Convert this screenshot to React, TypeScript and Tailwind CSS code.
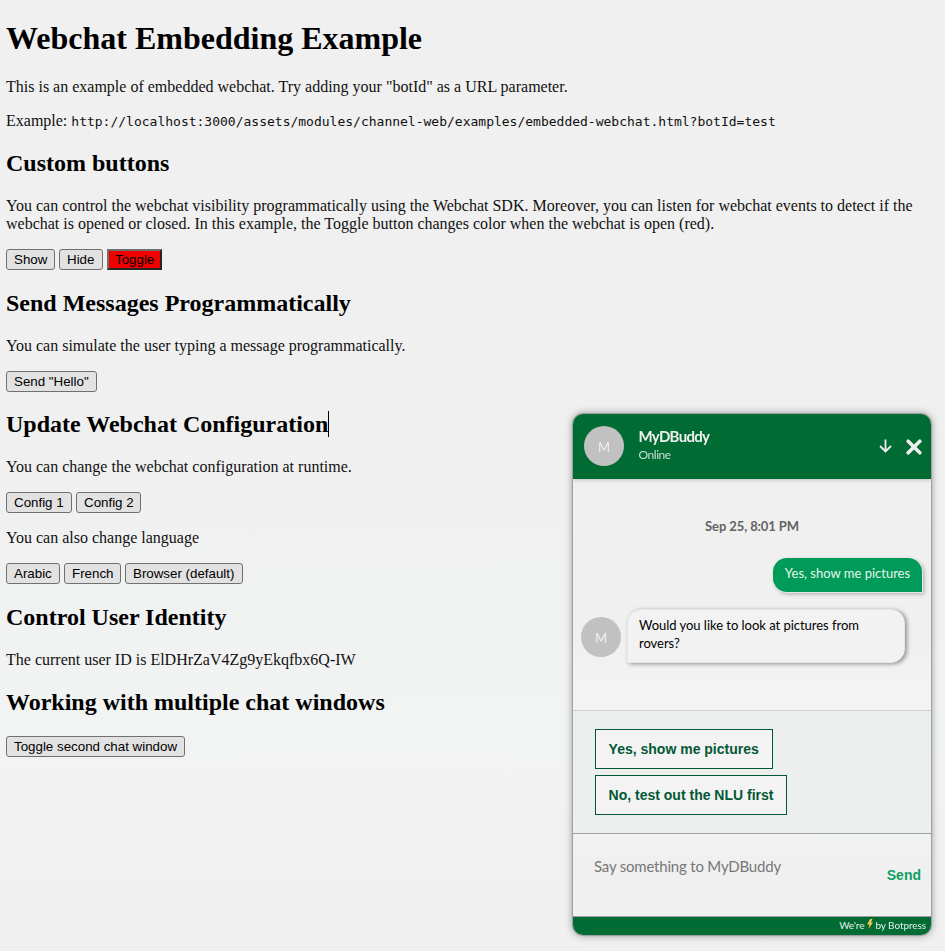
import React from "react";

const serif = "font-['Liberation_Serif',serif]";
const lato = "font-['Lato',sans-serif]";

function H2({ children, tight }: { children: React.ReactNode; tight?: boolean }) {
  return (
    <h2 className={(tight ? "mt-[19px] " : "mt-[20px] ") + "mb-[20px] flex h-[27px] items-center text-[24px] leading-[27px] font-bold text-black"}>
      {children}
    </h2>
  );
}

function Btn({ children, w, active }: { children: React.ReactNode; w: string; active?: boolean }) {
  return (
    <button
      className={
        (active
          ? "border-2 border-t-[#6f6f6f] border-l-[#6f6f6f] border-r-[#262626] border-b-[#262626] bg-[#f20000] pl-[6px] "
          : "rounded-[3px] border border-[#707070] bg-[#e2e2e2] pl-[7px] ") +
        "flex h-[21px] items-center justify-start font-['Liberation_Sans',sans-serif] text-[13.333px] leading-[15px] whitespace-nowrap text-black " +
        w
      }
    >
      {children}
    </button>
  );
}

function Row({ children }: { children: React.ReactNode }) {
  return <div className="flex h-[21px] gap-[4px]">{children}</div>;
}

function Avatar() {
  return (
    <div className="flex size-[40px] shrink-0 items-center justify-center rounded-full bg-[#c1c1c1] pt-px text-[13px] text-[#f0f0f0]">M</div>
  );
}

function ChatHeader() {
  return (
    <div className="z-10 flex h-[65px] shrink-0 items-center bg-[#006b32] pr-[9.5px] pb-px pl-[11px] shadow-[0_1px_4px_rgba(0,0,0,0.2)]">
      <Avatar />
      <div className="mb-[2px] ml-[14.5px] flex-1">
        <div className="text-[15px] leading-[19px] font-bold tracking-[-0.7px] text-[#f0f0f0]">MyDBuddy</div>
        <div className="mt-px text-[12px] leading-[16px] tracking-[-0.45px] text-[#c8dfd2]">Online</div>
      </div>
      <svg className="mr-[13.5px]" width="13" height="14" viewBox="0 0 13 14" fill="none" stroke="#f0f0f0" strokeWidth="1.8">
        <path d="M6.5 .5v12M1 7l5.5 5.5L12 7" />
      </svg>
      <svg className="mt-[1px]" width="16" height="16" viewBox="0 0 16 16" fill="none" stroke="#f0f0f0" strokeWidth="3.6" strokeLinecap="round">
        <path d="M2.2 2.2l11.6 11.6M13.8 2.2L2.2 13.8" />
      </svg>
    </div>
  );
}

function ChatWindow() {
  return (
    <section
      className={
        "fixed top-[414px] left-[573px] flex h-[521px] w-[358px] flex-col overflow-hidden rounded-[10px] bg-[#f0f0f0] shadow-[0_0_1px_1px_rgba(0,0,0,0.2),0_0_8px_rgba(0,0,0,0.42)] " +
        lato
      }
    >
      <ChatHeader />
      <div className="flex h-[231px] shrink-0 flex-col bg-linear-to-b from-[#f0f0f0] from-70% to-[#f4f4f4]">
        <div className="mt-[38px] text-center text-[13px] leading-[18px] font-bold tracking-[-0.1px] text-[#636363]">Sep 25, 8:01 PM</div>
        <div className="mt-[23px] mr-[9px] flex h-[34px] w-[149px] items-center justify-center self-end rounded-[14px] rounded-br-none bg-[#009b58] pb-[4px] text-[13px] whitespace-nowrap text-[#e8f4ed] shadow-[0_0_0_1px_#e6e6e6,2px_2px_4px_rgba(0,0,0,0.3)]">
          Yes, show me pictures
        </div>
        <div className="mt-[17px] ml-[8px] flex items-end">
          <div className="mb-[6px]">
            <Avatar />
          </div>
          <div className="ml-[6px] h-[54px] w-[278px] rounded-[14px] rounded-bl-none border border-[#e6e6e6] bg-[#f2f2f2] pt-[6px] pl-[11px] text-[13px] leading-[18px] tracking-[-0.03px] text-black shadow-[2px_1px_4px_rgba(0,0,0,0.4)]">
            Would you like to look at pictures from
            <br />
            rovers?
          </div>
        </div>
      </div>
      <div className="flex h-[124px] shrink-0 flex-col items-start gap-[6px] border-t border-b border-t-[#d0d1d0] border-b-[#9c9f9d] bg-[#edeeee] pt-[18px] pl-[22px] font-['Liberation_Sans',sans-serif] text-[14px] font-bold text-[#035834]">
        <div className="flex h-[40px] w-[178px] shrink-0 items-center border border-[#035834] bg-[#f2f3f2] pl-[12.6px]">Yes, show me pictures</div>
        <div className="flex h-[40px] w-[192px] shrink-0 items-center border border-[#035834] bg-[#f2f3f2] pl-[12.6px]">No, test out the NLU first</div>
      </div>
      <div className="flex h-[83px] shrink-0 justify-between border-b border-[#9c9f9d] bg-linear-to-b from-[#f1f3f2] to-[#f0f0f0] to-30% pr-[10px] pl-[21px]">
        <span className="mt-[22px] text-[15px] leading-[20px] tracking-[-0.2px] text-[#777777]">Say something to MyDBuddy</span>
        <span className="mt-[32px] font-['Liberation_Sans',sans-serif] text-[14px] leading-[18px] font-bold text-[#0f9f5f]">Send</span>
      </div>
      <div className="flex flex-1 items-center justify-end bg-[#006b32] pr-[5px] pb-[2px] text-[10px] leading-[14px] tracking-[-0.08px] whitespace-nowrap text-[#e4f0e9]">
        We're
        <svg className="mr-[2px] ml-[3px] mb-[2px]" width="6" height="10" viewBox="0 0 6 10">
          <path d="M3 0h2.5L4 3.5h2L1.4 10l1-4.4H0z" fill="#f4c34e" />
        </svg>
        by Botpress
      </div>
    </section>
  );
}

export default function App() {
  return (
    <main className={"h-[951px] overflow-hidden bg-[#f0f0f0] bg-[linear-gradient(180deg,#f0f0f0_0%,#f0f0f0_45%,#f0f1f1_60%,#f2f3f3_78%,#f1f1f1_90%,#f0f0f0_100%)] pt-[20px] pl-[6px] text-[16px] leading-[18px] text-[#111] " + serif}>
      <h1 className="h-[36px] text-[32px] leading-[37px] font-bold text-black">Webchat Embedding Example</h1>
      <p className="mt-[22px]">This is an example of embedded webchat. Try adding your "botId" as a URL parameter.</p>
      <p className="mt-[16px] h-[18px] whitespace-nowrap">
        Example:{" "}
        <code className="font-['DejaVu_Sans_Mono',monospace] text-[13px]">
          http://localhost:3000/assets/modules/channel-web/examples/embedded-webchat.html?botId=test
        </code>
      </p>

      <H2>Custom buttons</H2>
      <p className="whitespace-nowrap">
        You can control the webchat visibility programmatically using the Webchat SDK. Moreover, you can listen for webchat events to detect if the
        <br />
        webchat is opened or closed. In this example, the Toggle button changes color when the webchat is open (red).
      </p>
      <div className="mt-[16px]">
        <Row>
          <Btn w="w-[49px]">Show</Btn>
          <Btn w="w-[44px]">Hide</Btn>
          <Btn w="w-[55px]" active>Toggle</Btn>
        </Row>
      </div>

      <H2>Send Messages Programmatically</H2>
      <p className="mb-[16px]">You can simulate the user typing a message programmatically.</p>
      <Row>
        <Btn w="w-[91px]">Send "Hello"</Btn>
      </Row>

      <H2 tight>
        Update Webchat Configuration
        <span className="mb-px h-[26px] w-px bg-black" />
      </H2>
      <p className="mb-[16px]">You can change the webchat configuration at runtime.</p>
      <Row>
        <Btn w="w-[66px]">Config 1</Btn>
        <Btn w="w-[65px]">Config 2</Btn>
      </Row>
      <p className="my-[16px]">You can also change language</p>
      <Row>
        <Btn w="w-[54px]">Arabic</Btn>
        <Btn w="w-[57px]">French</Btn>
        <Btn w="w-[118px]">Browser (default)</Btn>
      </Row>

      <H2>Control User Identity</H2>
      <p>The current user ID is ElDHrZaV4Zg9yEkqfbx6Q-IW</p>

      <H2>Working with multiple chat windows</H2>
      <Row>
        <Btn w="w-[179px]">Toggle second chat window</Btn>
      </Row>

      <ChatWindow />
    </main>
  );
}
